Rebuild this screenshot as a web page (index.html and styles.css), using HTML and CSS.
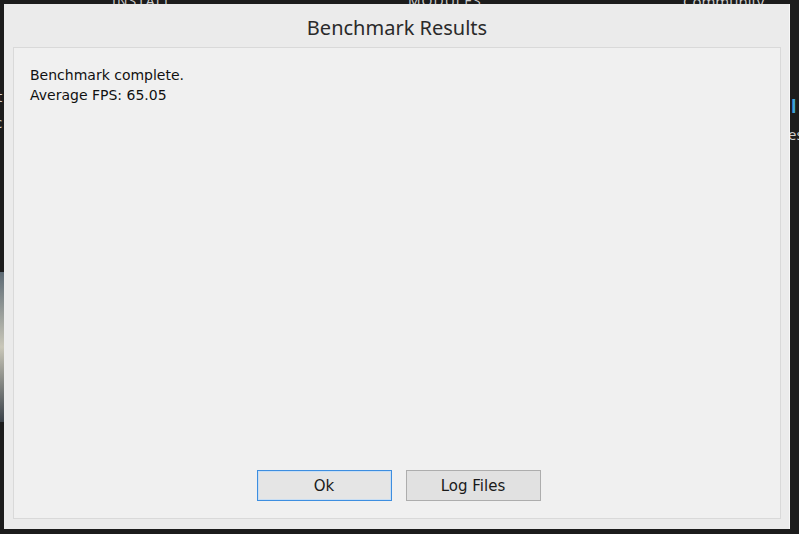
FILE: index.html
```html
<!DOCTYPE html>
<html>
<head>
  <title>Benchmark Results</title>
  <link rel="stylesheet" href="styles.css">
</head>
<body>

  <div class="backdrop">
    <span class="bg-tab tab-install">INSTALL</span>
    <span class="bg-tab tab-modules">MODULES</span>
    <span class="bg-link">Community Guides</span>
    <span class="bg-glyph g-t">t</span>
    <span class="bg-glyph g-c">c</span>
    <span class="bg-glyph g-l">l</span>
    <span class="bg-glyph g-es">es</span>
    <div class="bg-photo"></div>
  </div>

  <div class="dialog">
    <div class="dialog-title">Benchmark Results</div>
    <div class="panel">
      <div class="message">
        <p>Benchmark complete.</p>
        <p>Average FPS: 65.05</p>
      </div>
      <div class="actions">
        <button class="btn btn-default">Ok</button>
        <button class="btn">Log Files</button>
      </div>
    </div>
  </div>

</body>
</html>
```

FILE: styles.css
```css
body { margin: 0; width: 799px; height: 534px; overflow: hidden; background: #1c1c1c; font-family: "DejaVu Sans", sans-serif; position: relative; }

.backdrop { position: absolute; inset: 0; }
.bg-tab, .bg-link, .bg-glyph { position: absolute; font-family: "Open Sans", sans-serif; color: #cfcfcf; }
.bg-tab { top: -9px; font-size: 14px; letter-spacing: 1px; }
.tab-install { left: 112px; }
.tab-modules { left: 408px; }
.bg-link { top: -9px; left: 683px; font-size: 15px; }
.bg-glyph { font-size: 15px; }
.g-t { left: -3px; top: 86px; }
.g-c { left: -5px; top: 112px; }
.g-l { left: 791px; top: 94px; color: #3ea0d8; font-weight: 700; font-size: 18px; }
.g-es { left: 788px; top: 124px; }
.bg-photo { position: absolute; left: 0; top: 272px; width: 6px; height: 150px; background: linear-gradient(#5d6a74, #c9c7b9 50%, #3a4148); }

.dialog { position: absolute; left: 4px; top: 4px; width: 786px; height: 525px; box-sizing: border-box; background: #ebebeb; border-right: 1px solid #f7f7f7; padding: 0 8px 10px 9px; display: flex; flex-direction: column; }
.dialog-title { height: 43px; padding-top: 11px; box-sizing: border-box; text-align: center; font-family: "Noto Sans", sans-serif; font-size: 20px; color: #2a2a2a; line-height: 26px; }

.panel { flex: 1; background: #f0f0f0; border: 1px solid #d9d9d9; padding: 17px 16px 17px 16px; display: flex; flex-direction: column; }
.message { flex: 1; font-size: 14px; color: #111; line-height: 20px; }
.message p { margin: 0; }

.actions { display: flex; justify-content: center; gap: 14px; padding-left: 3px; }
.btn { width: 135px; height: 31px; font-family: "DejaVu Sans", sans-serif; font-size: 15px; color: #1a1a1a; background: #e1e1e1; border: 1px solid #adadad; padding: 0; }
.btn-default { background: #e5e5e5; border: 1px solid #3d8ee0; box-shadow: inset 0 0 0 1px #c9def3; }
```
